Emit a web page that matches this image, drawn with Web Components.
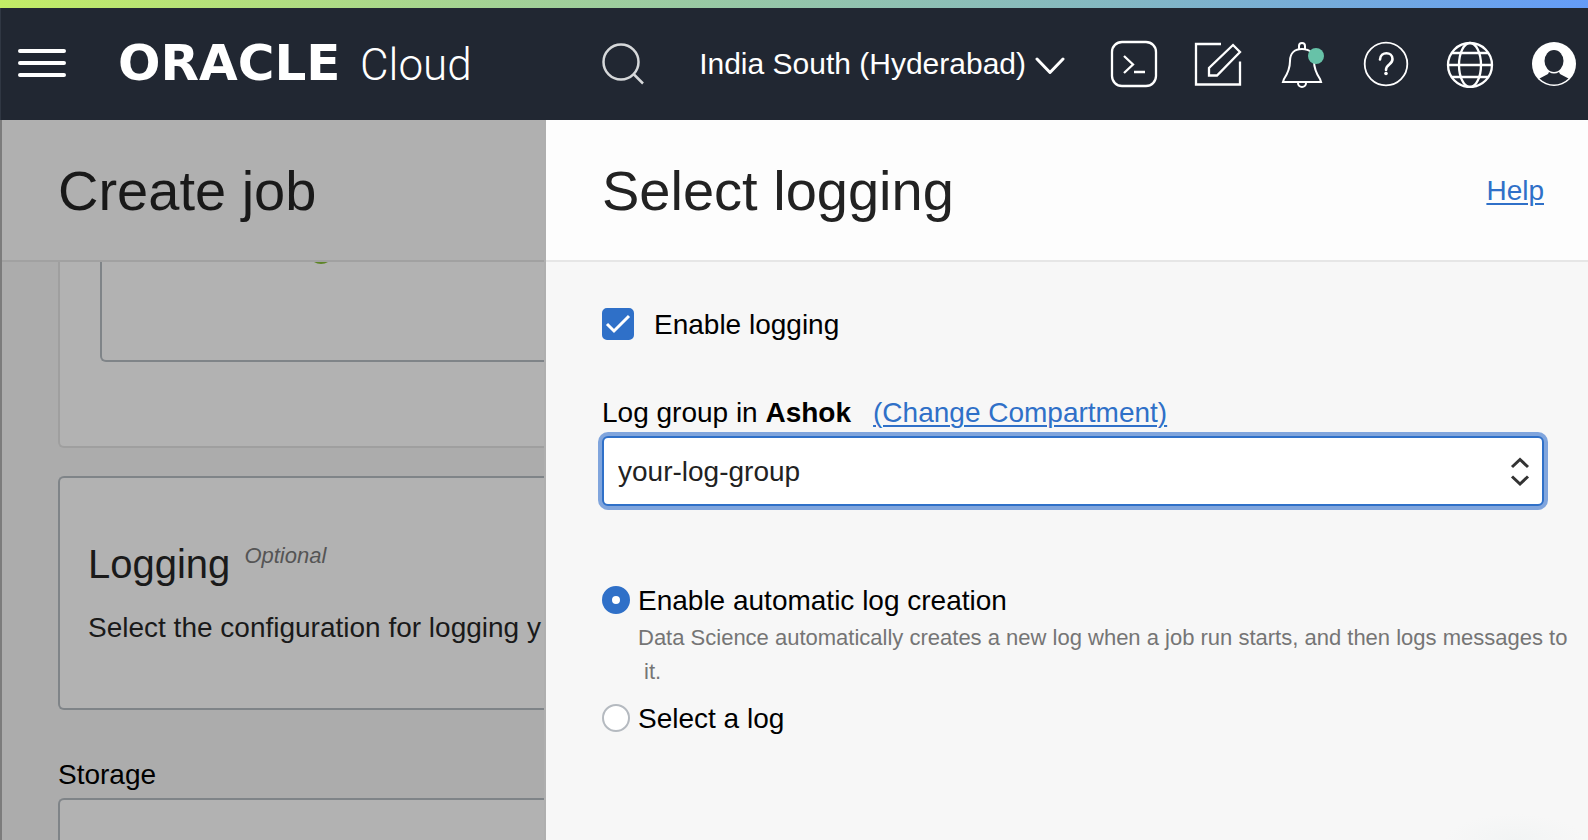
<!DOCTYPE html>
<html lang="en">
<head>
<meta charset="utf-8">
<meta name="viewport" content="width=device-width, initial-scale=1">
<title>Create job - Select logging</title>
<style>
  html, body { margin: 0; }
  body { font-family: "Liberation Sans", Arial, sans-serif; font-size: 28px; line-height: 32px; color: #000; }
</style>
</head>
<body>
<app-shell>
  <console-header slot="header" region="India South (Hyderabad)"></console-header>

  <app-pane slot="page" dimmed heading="Create job">
    <job-form></job-form>
  </app-pane>

  <app-pane slot="drawer" heading="Select logging">
    <a-link slot="action">Help</a-link>
    <drawer-form>
      <check-field>Enable logging</check-field>
      <select-field value="your-log-group">
        <span slot="label">Log group in <b>Ashok</b></span>
        <a-link slot="link">(Change Compartment)</a-link>
      </select-field>
      <log-source></log-source>
    </drawer-form>
  </app-pane>
</app-shell>

<script>
const define = (name, html, setup) => {
  const template = document.createElement('template');
  template.innerHTML = html;
  customElements.define(name, class extends HTMLElement {
    constructor() {
      super();
      this.attachShadow({ mode: 'open' }).append(template.content.cloneNode(true));
    }
    connectedCallback() { if (setup) setup(this, this.shadowRoot); }
  });
};

define('app-shell', `
  <style>
    :host { display: flex; flex-direction: column; min-height: 100vh; }
    main { flex: 1; display: grid; grid-template-columns: minmax(0, 546fr) minmax(0, 1042fr); }
    slot { display: contents; }
  </style>
  <slot name="header"></slot>
  <main><slot name="page"></slot><slot name="drawer"></slot></main>`);

define('brand-logo', `
  <style>
    :host { display: block; }
    a { display: grid; grid-template-columns: 242px auto; align-items: baseline; line-height: 56px; color: #fff; text-decoration: none; }
    .name { font-family: "DejaVu Sans", sans-serif; font-weight: 700; font-size: 50px; }
    .product { font-family: Roboto, "Liberation Sans", sans-serif; font-weight: 300; font-size: 44px; }
  </style>
  <a href="#"><span class="name">ORACLE</span><span class="product">Cloud</span></a>`);

define('icon-button', `
  <style>
    :host { display: block; }
    button { display: block; width: 48px; height: 48px; padding: 0; border: 0; background: none; color: #fff; cursor: pointer; }
    ::slotted(svg) { display: block; }
  </style>
  <button type="button"><slot></slot></button>`,
  (host, root) => root.querySelector('button').setAttribute('aria-label', host.getAttribute('label')));

define('console-header', `
  <style>
    :host { display: block; color: #fff; }
    .stripe { height: 8px; background: linear-gradient(90deg, #c2ec66, #a3d295 31%, #84b8c2 70%, #649cf8); }
    header { display: flex; align-items: center; height: 112px; padding: 0 10px 0 17px; border-left: 1px solid #303743; background: #212732; box-sizing: border-box; }
    brand-logo { margin-left: 52px; }
    .search { margin-left: auto; }
    .region { display: flex; align-items: center; gap: 9px; margin: 0 45px 0 51px; padding: 0; border: 0; background: none; color: #fff; font: 30px/36px "Liberation Sans", Arial, sans-serif; white-space: nowrap; }
    .tools { display: flex; gap: 36px; }
    svg { fill: none; stroke: #fff; stroke-width: 2; }
  </style>
  <div class="stripe"></div>
  <header>
    <icon-button label="Navigation menu">
      <svg width="48" height="48" stroke-linecap="round" style="stroke-width:4"><path d="M2 11H46M2 23H46M2 35H46"/></svg>
    </icon-button>
    <brand-logo></brand-logo>
    <icon-button class="search" label="Search">
      <svg width="48" height="48" style="stroke:#d6d8da;stroke-width:2.500"><circle cx="21" cy="22" r="17.500"/><path d="M33.500 34L43 43.500"/></svg>
    </icon-button>
    <button class="region" type="button"><span></span>
      <svg width="30" height="20" stroke-linecap="round" stroke-linejoin="round" style="stroke-width:3"><path d="M2 5L15 18.500L28 5"/></svg>
    </button>
    <div class="tools">
      <icon-button label="Developer tools">
        <svg width="48" height="48" style="stroke-width:2.300"><rect x="2" y="2" width="44" height="44" rx="10"/><path d="M14 16L23 24.500L14 33M24 32H35"/></svg>
      </icon-button>
      <icon-button label="Feedback">
        <svg width="48" height="48" style="stroke-width:2.300"><path d="M27 4H2V44.500H46V21.500M39 5L46 12L23 35.500H15V28Z"/></svg>
      </icon-button>
      <icon-button label="Announcements">
        <svg width="48" height="48"><path d="M21 9V6A3 3 0 0 1 27 6V9M5 42H43L42 39C38 33 36 28 36 21C36 13 31 9 24 9S12 13 12 21C12 28 10 33 6 39ZM20 43A4 4 0 0 0 28 43"/><circle cx="38" cy="16" r="8" fill="#67c2a8" stroke="none"/></svg>
      </icon-button>
      <icon-button label="Help">
        <svg width="48" height="48"><circle cx="24" cy="24" r="21.300" style="stroke-width:1.800"/><path d="M18 19.500C18.500 11 30.500 11.500 30.500 19C30.500 25 24 24 24 30" stroke-linecap="round" style="stroke-width:2.600"/><circle cx="24" cy="33.500" r="1.800" fill="#fff" stroke="none"/></svg>
      </icon-button>
      <icon-button label="Language">
        <svg width="48" height="48" style="stroke-width:2.300"><circle cx="24" cy="25" r="22"/><ellipse cx="24" cy="25" rx="11" ry="22"/><path d="M6 13H42M2 25H46M6 37H42"/></svg>
      </icon-button>
      <icon-button label="Profile">
        <svg width="48" height="48"><circle cx="24" cy="24" r="22" fill="#fff" stroke="none"/><ellipse cx="24" cy="21" rx="9.500" ry="11" fill="#212732" stroke="none"/><path d="M9.500 38.500L18 34L19 32Q24 35 29 32L30 34L38.500 38.500Q32 44.500 24 44.500T9.500 38.500Z" fill="#212732" stroke="none"/></svg>
      </icon-button>
    </div>
  </header>`,
  (host, root) => { root.querySelector('.region span').textContent = host.getAttribute('region'); });

define('app-pane', `
  <style>
    :host { display: flex; flex-direction: column; min-width: 0; overflow: hidden; background: radial-gradient(70px 26px at calc(100% - 73px) 100%, #f2f4f4, #f7f7f7); }
    :host([dimmed]) { border-left: 2px solid #7c7c7c; border-right: 2px solid #afafaf; background: #acacac; }
    header { display: flex; align-items: center; justify-content: space-between; box-sizing: border-box; height: 142px; padding: 2px 44px 0 56px; border-bottom: 2px solid #e6e6e6; background: #fdfdfd; }
    :host([dimmed]) header { background: #b0b0b0; border-color: #a1a1a1; }
    h1 { margin: 0; font-size: 56px; line-height: 64px; font-weight: 400; color: #222; white-space: nowrap; }
    :host([dimmed]) h1 { color: #191919; }
  </style>
  <header><h1></h1><slot name="action"></slot></header>
  <slot></slot>`,
  (host, root) => { root.querySelector('h1').textContent = host.getAttribute('heading'); });

define('a-link', `
  <style>
    :host { display: inline-block; }
    a { color: #2f70c8; text-decoration-thickness: 2px; text-underline-offset: 3px; white-space: nowrap; }
  </style>
  <a href="#"><slot></slot></a>`);

define('form-card', `
  <style>
    :host { display: block; border: 2px solid #7f8488; border-right: 0; border-radius: 6px 0 0 6px; background: #b2b2b2; }
    :host([quiet]) { border-color: #9f9f9f; }
    :host([open-top]) { border-top: 0; border-top-left-radius: 0; }
    :host([open-bottom]) { border-bottom: 0; border-bottom-left-radius: 0; }
  </style>
  <slot></slot>`);

define('job-form', `
  <style>
    :host { flex: 1; display: flex; flex-direction: column; padding-left: 56px; }
    .outer { padding: 0 0 84px 40px; }
    .inner { height: 98px; }
    .inner svg { display: block; margin-left: 211px; }
    .logging { margin-top: 28px; padding: 62px 0 64px 28px; color: #1a1a1a; }
    .title { display: flex; align-items: flex-start; gap: 14px; }
    h2 { margin: 0; font-size: 40px; line-height: 48px; font-weight: 400; }
    em { font-size: 22px; line-height: 32px; color: #555; }
    p { margin: 24px 0 0; white-space: nowrap; }
    h3 { margin: 49px 0 7px; font-size: 28px; line-height: 32px; font-weight: 400; }
    .storage { flex: 1; }
  </style>
  <form-card class="outer" quiet open-top>
    <form-card class="inner" open-top>
      <svg width="16" height="2"><circle cx="8" cy="-11" r="13" fill="#5e8527"/></svg>
    </form-card>
  </form-card>
  <form-card class="logging">
    <div class="title"><h2>Logging</h2><em>Optional</em></div>
    <p>Select the configuration for logging y</p>
  </form-card>
  <h3>Storage</h3>
  <form-card class="storage" open-bottom></form-card>`);

define('drawer-form', `
  <style>
    :host { display: block; padding: 45px 10px 46px 56px; }
  </style>
  <slot></slot>`);

define('check-field', `
  <style>
    :host { display: block; }
    label { display: flex; align-items: center; gap: 20px; }
    .text { padding-top: 2px; }
    .box { display: grid; }
    .box > * { grid-area: 1 / 1; }
    input { appearance: none; width: 32px; height: 32px; margin: 0; border: 2px solid #b5bac0; border-radius: 5px; background: #fff; }
    input:checked { border-color: #2f70c8; background: #2f70c8; }
    svg { fill: none; stroke: #fff; stroke-width: 3; pointer-events: none; }
    input:not(:checked) + svg { visibility: hidden; }
  </style>
  <label><span class="box"><input type="checkbox" checked><svg width="32" height="32"><path d="M5 16L12 23L27 8"/></svg></span><span class="text"><slot></slot></span></label>`);

define('select-field', `
  <style>
    :host { display: block; margin: 56px 34px 0 0; }
    .caption { display: flex; gap: 22px; margin-bottom: 7px; white-space: nowrap; }
    .control { display: grid; align-items: center; }
    .control > * { grid-area: 1 / 1; }
    select { appearance: none; width: 100%; height: 70px; padding: 2px 60px 0 14px; border: 2px solid #2f70c8; border-radius: 6px; outline: 0; box-shadow: 0 0 0 4px #80a5dd; background: #fff; color: #222; font: inherit; }
    svg { justify-self: end; margin-right: 12px; fill: none; stroke: #333; stroke-width: 3; pointer-events: none; }
  </style>
  <div class="caption"><label for="choice"><slot name="label"></slot></label><slot name="link"></slot></div>
  <div class="control">
    <select id="choice"><option></option></select>
    <svg width="24" height="36"><path d="M4 14L12 6.500L20 14M4 23.500L12 31L20 23.500"/></svg>
  </div>`,
  (host, root) => { root.querySelector('option').textContent = host.getAttribute('value'); });

define('log-source', `
  <style>
    :host { display: block; margin-top: 77px; }
    fieldset { min-width: 0; margin: 0; padding: 0; border: 0; }
    label { display: flex; align-items: center; gap: 8px; }
    span { padding-top: 2px; }
    input { appearance: none; flex: none; width: 28px; height: 28px; margin: 0; border: 2px solid #b5bac0; border-radius: 50%; background: #fff; }
    input:checked { border: 10px solid #2f70c8; }
    p { margin: 4px 0 12px 36px; font-size: 22px; line-height: 34px; color: #757575; }
  </style>
  <fieldset aria-label="Log source">
    <label><input type="radio" name="source" checked aria-describedby="auto-hint"><span>Enable automatic log creation</span></label>
    <p id="auto-hint">Data Science automatically creates a new log when a job run starts, and then logs messages to &nbsp;it.</p>
    <label><input type="radio" name="source"><span>Select a log</span></label>
  </fieldset>`);
</script>
</body>
</html>
